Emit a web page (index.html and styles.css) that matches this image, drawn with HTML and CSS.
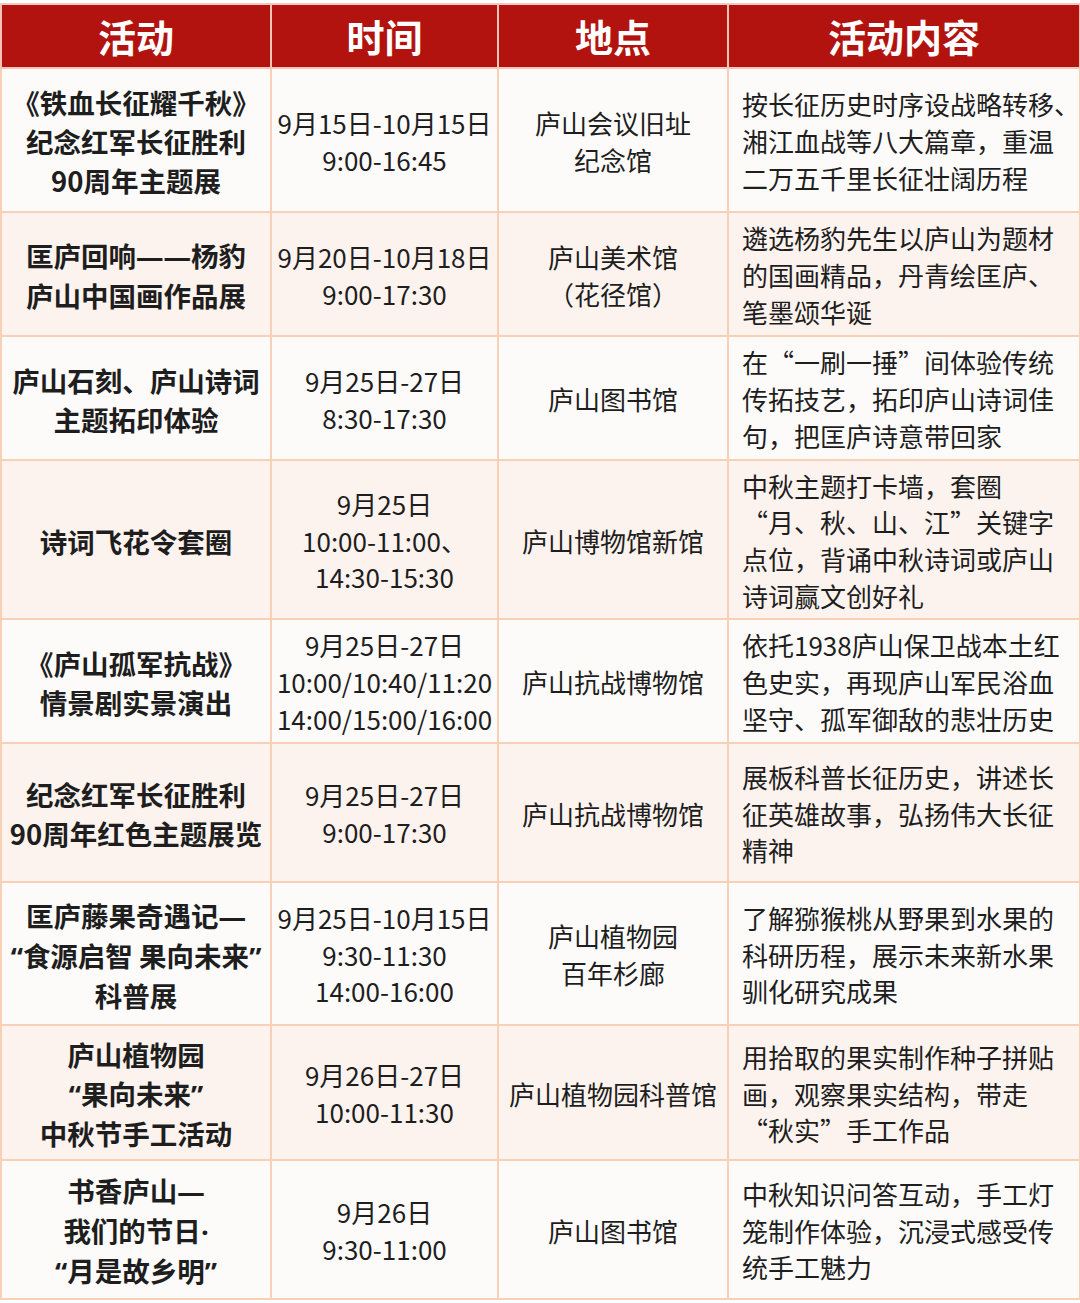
FILE: index.html
```html
<!DOCTYPE html>
<html lang="zh-CN">
<head>
<meta charset="utf-8">
<title>活动安排</title>
<link rel="stylesheet" href="styles.css">
</head>
<body>
<div class="sheet">
<table class="schedule">
  <colgroup>
    <col class="c-act"><col class="c-time"><col class="c-place"><col class="c-desc">
  </colgroup>
  <thead>
    <tr><th>活动</th><th>时间</th><th>地点</th><th>活动内容</th></tr>
  </thead>
  <tbody>
    <tr>
      <td class="act">《铁血长征耀千秋》<br>纪念红军长征胜利<br>90周年主题展</td>
      <td class="time">9月15日-10月15日<br>9:00-16:45</td>
      <td class="place">庐山会议旧址<br>纪念馆</td>
      <td class="desc">按长征历史时序设战略转移、<br>湘江血战等八大篇章，重温<br>二万五千里长征壮阔历程</td>
    </tr>
    <tr>
      <td class="act">匡庐回响<span class="lat">——</span>杨豹<br>庐山中国画作品展</td>
      <td class="time">9月20日-10月18日<br>9:00-17:30</td>
      <td class="place">庐山美术馆<br>（花径馆）</td>
      <td class="desc">遴选杨豹先生以庐山为题材<br>的国画精品，丹青绘匡庐、<br>笔墨颂华诞</td>
    </tr>
    <tr>
      <td class="act">庐山石刻、庐山诗词<br>主题拓印体验</td>
      <td class="time">9月25日-27日<br>8:30-17:30</td>
      <td class="place">庐山图书馆</td>
      <td class="desc">在“一刷一捶”间体验传统<br>传拓技艺，拓印庐山诗词佳<br>句，把匡庐诗意带回家</td>
    </tr>
    <tr>
      <td class="act">诗词飞花令套圈</td>
      <td class="time">9月25日<br>10:00-11:00、<br>14:30-15:30</td>
      <td class="place">庐山博物馆新馆</td>
      <td class="desc">中秋主题打卡墙，套圈<br>“月、秋、山、江”关键字<br>点位，背诵中秋诗词或庐山<br>诗词赢文创好礼</td>
    </tr>
    <tr>
      <td class="act">《庐山孤军抗战》<br>情景剧实景演出</td>
      <td class="time">9月25日-27日<br>10:00/10:40/11:20<br>14:00/15:00/16:00</td>
      <td class="place">庐山抗战博物馆</td>
      <td class="desc">依托1938庐山保卫战本土红<br>色史实，再现庐山军民浴血<br>坚守、孤军御敌的悲壮历史</td>
    </tr>
    <tr>
      <td class="act">纪念红军长征胜利<br>90周年红色主题展览</td>
      <td class="time">9月25日-27日<br>9:00-17:30</td>
      <td class="place">庐山抗战博物馆</td>
      <td class="desc">展板科普长征历史，讲述长<br>征英雄故事，弘扬伟大长征<br>精神</td>
    </tr>
    <tr>
      <td class="act">匡庐藤果奇遇记<span class="lat">—</span><br><span class="lat">“</span>食源启智 果向未来<span class="lat">”</span><br>科普展</td>
      <td class="time">9月25日-10月15日<br>9:30-11:30<br>14:00-16:00</td>
      <td class="place">庐山植物园<br>百年杉廊</td>
      <td class="desc">了解猕猴桃从野果到水果的<br>科研历程，展示未来新水果<br>驯化研究成果</td>
    </tr>
    <tr>
      <td class="act">庐山植物园<br><span class="lat">“</span>果向未来<span class="lat">”</span><br>中秋节手工活动</td>
      <td class="time">9月26日-27日<br>10:00-11:30</td>
      <td class="place">庐山植物园科普馆</td>
      <td class="desc">用拾取的果实制作种子拼贴<br>画，观察果实结构，带走<br>“秋实”手工作品</td>
    </tr>
    <tr>
      <td class="act">书香庐山<span class="lat">—</span><br>我们的节日<span class="lat">·</span><br><span class="lat">“</span>月是故乡明<span class="lat">”</span></td>
      <td class="time">9月26日<br>9:30-11:00</td>
      <td class="place">庐山图书馆</td>
      <td class="desc">中秋知识问答互动，手工灯<br>笼制作体验，沉浸式感受传<br>统手工魅力</td>
    </tr>
  </tbody>
</table>
</div>
</body>
</html>
```
FILE: styles.css
```css
html, body {
  margin: 0;
  padding: 0;
  background: #ffffff;
}

body {
  font-family: "Noto Sans CJK SC", "Noto Sans", sans-serif;
  color: #1e1e1e;
}

.sheet {
  padding-top: 3px;
  width: 1080px;
}

.schedule {
  border-collapse: collapse;
  table-layout: fixed;
  width: 1079px;
}

.c-act { width: 270px; }
.c-time { width: 227px; }
.c-place { width: 230px; }
.c-desc { width: 352px; }

.schedule th {
  background: #b3130f;
  color: #ffffff;
  font-size: 38px;
  font-weight: 700;
  line-height: 40px;
  height: 62px;
  padding: 0;
  border: 2px solid #f4c4b6;
  border-top-color: #f2c8c2;
}

.schedule td {
  border: 2px solid #f7d0b6;
  padding: 3px 0 0 0;
  vertical-align: middle;
  white-space: nowrap;
  font-size: 26px;
  line-height: 36.7px;
}

.schedule tbody tr:nth-child(odd) td { background: #fdfbfa; }
.schedule tbody tr:nth-child(even) td { background: #fdf3ee; }

.schedule td.act {
  text-align: center;
  font-weight: 700;
  font-size: 27.5px;
  line-height: 39px;
}

.lat {
  font-family: "Noto Sans", "Noto Sans CJK SC", sans-serif;
}

.schedule td.time,
.schedule td.place {
  text-align: center;
}

.schedule td.desc {
  text-align: left;
  padding-left: 13px;
}

.schedule tbody tr:nth-child(1) { height: 144px; }
.schedule tbody tr:nth-child(2) { height: 124px; }
.schedule tbody tr:nth-child(3) { height: 124px; }
.schedule tbody tr:nth-child(4) { height: 159px; }
.schedule tbody tr:nth-child(5) { height: 124px; }
.schedule tbody tr:nth-child(6) { height: 139px; }
.schedule tbody tr:nth-child(7) { height: 143px; }
.schedule tbody tr:nth-child(8) { height: 135px; }
.schedule tbody tr:nth-child(9) { height: 139px; }
```
